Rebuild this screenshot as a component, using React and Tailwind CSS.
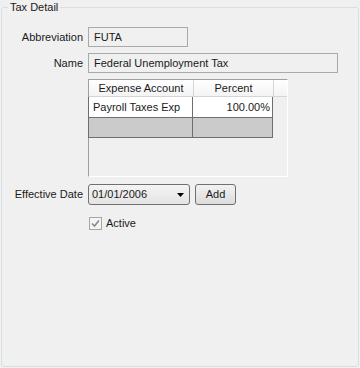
export default function App() {
  return (
    <div className="w-[360px] h-[368px] bg-[#f0f0f0] font-['Liberation_Sans',Arial,sans-serif] text-[11px] text-[#1a1a1a] pl-[1px]">
      <fieldset className="w-[358px] h-[367px] border border-[#d5dfe5] rounded-[3px]">
        <legend className="ml-[6px] px-[2px] leading-[14px] text-[#1a1a1a]">Tax Detail</legend>

        <div className="flex flex-col pt-[13px]">
          {/* Abbreviation */}
          <div className="flex items-center h-[20px]">
            <div className="w-[86px] pr-[5px] text-right">Abbreviation</div>
            <div className="w-[100px] h-[20px] border border-[#a9a9a9] bg-[#f0f0f0] pl-[5px] flex items-center">FUTA</div>
          </div>

          {/* Name */}
          <div className="flex items-center h-[20px] mt-[6px]">
            <div className="w-[86px] pr-[5px] text-right">Name</div>
            <div className="w-[250px] h-[20px] border border-[#a9a9a9] bg-[#f0f0f0] pl-[5px] flex items-center">Federal Unemployment Tax</div>
          </div>

          {/* Grid */}
          <div className="flex mt-[6px]">
            <div className="w-[86px]" />
            <div className="w-[200px] h-[98px] border-t border-l border-t-[#a0a0a0] border-l-[#a0a0a0] border-r border-b border-r-white border-b-white bg-[#f0f0f0] flex flex-col">
              <div className="flex h-[17px] bg-gradient-to-b from-white to-[#f3f3f3] border-b border-[#d5d5d5]">
                <div className="w-[105px] border-r border-[#d5d5d5] flex items-center justify-center">Expense Account</div>
                <div className="w-[80px] border-r border-[#d5d5d5] flex items-center justify-center">Percent</div>
                <div className="flex-1" />
              </div>
              <div className="flex h-[21px]">
                <div className="w-[105px] bg-white border-l border-r border-b border-[#6e6e6e] flex items-center pl-[4px] -ml-[1px]">Payroll Taxes Exp</div>
                <div className="w-[80px] bg-white border-r border-b border-[#6e6e6e] flex items-center justify-end pr-[2px]">100.00%</div>
              </div>
              <div className="flex h-[20px]">
                <div className="w-[105px] bg-[#cbcbcb] border-l border-r border-b border-[#6e6e6e] -ml-[1px]" />
                <div className="w-[80px] bg-[#cbcbcb] border-r border-b border-[#6e6e6e]" />
              </div>
            </div>
          </div>

          {/* Effective Date */}
          <div className="flex items-center h-[21px] mt-[7px]">
            <div className="w-[86px] pr-[5px] text-right">Effective Date</div>
            <div className="w-[102px] h-[21px] border border-[#707070] rounded-[3px] bg-gradient-to-b from-[#f4f4f4] to-[#e4e4e4] flex items-center pl-[3px] pr-[5px]">
              <span className="flex-1">01/01/2006</span>
              <svg width="7" height="4" viewBox="0 0 7 4">
                <path d="M0 0H7L3.5 4Z" fill="#000" />
              </svg>
            </div>
            <div className="ml-[5px] w-[41px] h-[21px] border border-[#707070] rounded-[3px] bg-gradient-to-b from-[#f2f2f2] to-[#dcdcdc] flex items-center justify-center">Add</div>
          </div>

          {/* Active */}
          <div className="flex items-center mt-[10px] pl-[87px]">
            <div className="w-[13px] h-[13px] border border-[#a6a6a6] bg-[#f4f4f4] flex items-center justify-center">
              <svg width="9" height="9" viewBox="0 0 9 9">
                <path d="M1 4.5L3.5 7L8 1.5" stroke="#8a8a8a" strokeWidth="1.6" fill="none" />
              </svg>
            </div>
            <span className="ml-[4px]">Active</span>
          </div>
        </div>
      </fieldset>
    </div>
  );
}
